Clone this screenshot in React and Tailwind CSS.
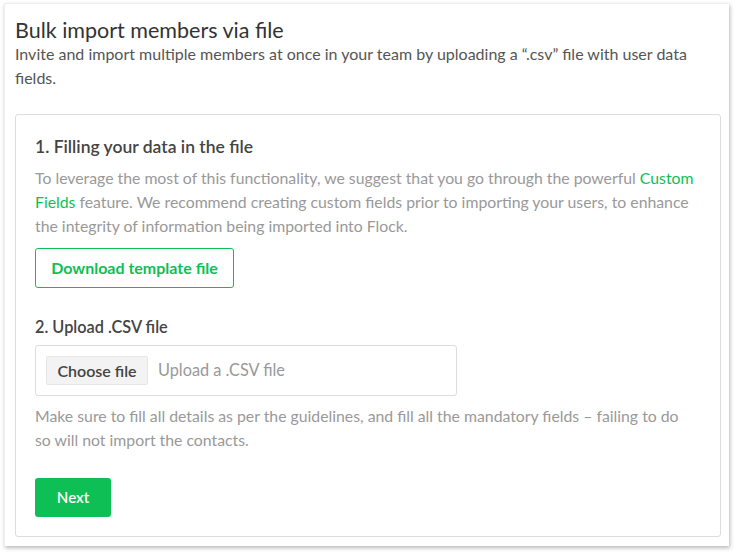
import React from 'react';

const green = 'text-[#0dbf55]';

export default function App() {
  return (
    <div className="w-[734px] h-[552px] bg-white pl-[4px] pt-[3px] font-['Lato','Liberation_Sans',sans-serif]">
      <div className="w-[725px] h-[543px] bg-white shadow-[1px_2px_4px_rgba(0,0,0,0.28)] border-t border-l border-[#eee] pl-[10px] pr-[8px] pt-[12px]">
        <h1 className="text-[21.5px] leading-[28px] text-[#333]">Bulk import members via file</h1>
        <p className="text-[16px] leading-[24px] text-[#555] mt-[-2px] pr-[20px]">
          Invite and import multiple members at once in your team by uploading a “.csv” file with user data fields.
        </p>

        <div className="mt-[24px] border border-[#ddd] rounded-[3px] pl-[19px] pr-[14px] pt-[20px] pb-[19px]">
          <h2 className="text-[17.5px] leading-[24px] font-semibold text-[#444]">1. Filling your data in the file</h2>
          <p className="mt-[7px] text-[15.8px] leading-[24px] text-[#999]">
            To leverage the most of this functionality, we suggest that you go through the powerful{' '}
            <span className={green}>Custom</span> <span className={green}>Fields</span> feature. We recommend creating custom fields prior to importing your users, to enhance the integrity of information being imported into Flock.
          </p>
          <button className="mt-[10px] h-[40px] w-[199px] border border-[#0dbf55] rounded-[3px] text-[16px] font-bold text-[#0dbf55]">
            Download template file
          </button>

          <h2 className="mt-[27px] text-[16.3px] leading-[24px] font-semibold text-[#444]">2. Upload .CSV file</h2>
          <div className="mt-[6px] w-[422px] h-[51px] border border-[#ddd] rounded-[3px] flex items-center pl-[10px] gap-[10px]">
            <div className="h-[29px] w-[102px] justify-center flex items-center bg-[#f3f3f3] border border-[#e6e6e6] rounded-[2px] text-[16px] font-semibold text-[#444]">
              Choose file
            </div>
            <span className="text-[16.3px] text-[#999]">Upload a .CSV file</span>
          </div>

          <p className="mt-[8px] pr-[22px] text-[15.8px] leading-[24px] text-[#999]">
            Make sure to fill all details as per the guidelines, and fill all the mandatory fields – failing to do so will not import the contacts.
          </p>
          <button className="mt-[26px] h-[39px] w-[76px] bg-[#0dbf55] rounded-[3px] text-white text-[15px] font-semibold">
            Next
          </button>
        </div>
      </div>
    </div>
  );
}
